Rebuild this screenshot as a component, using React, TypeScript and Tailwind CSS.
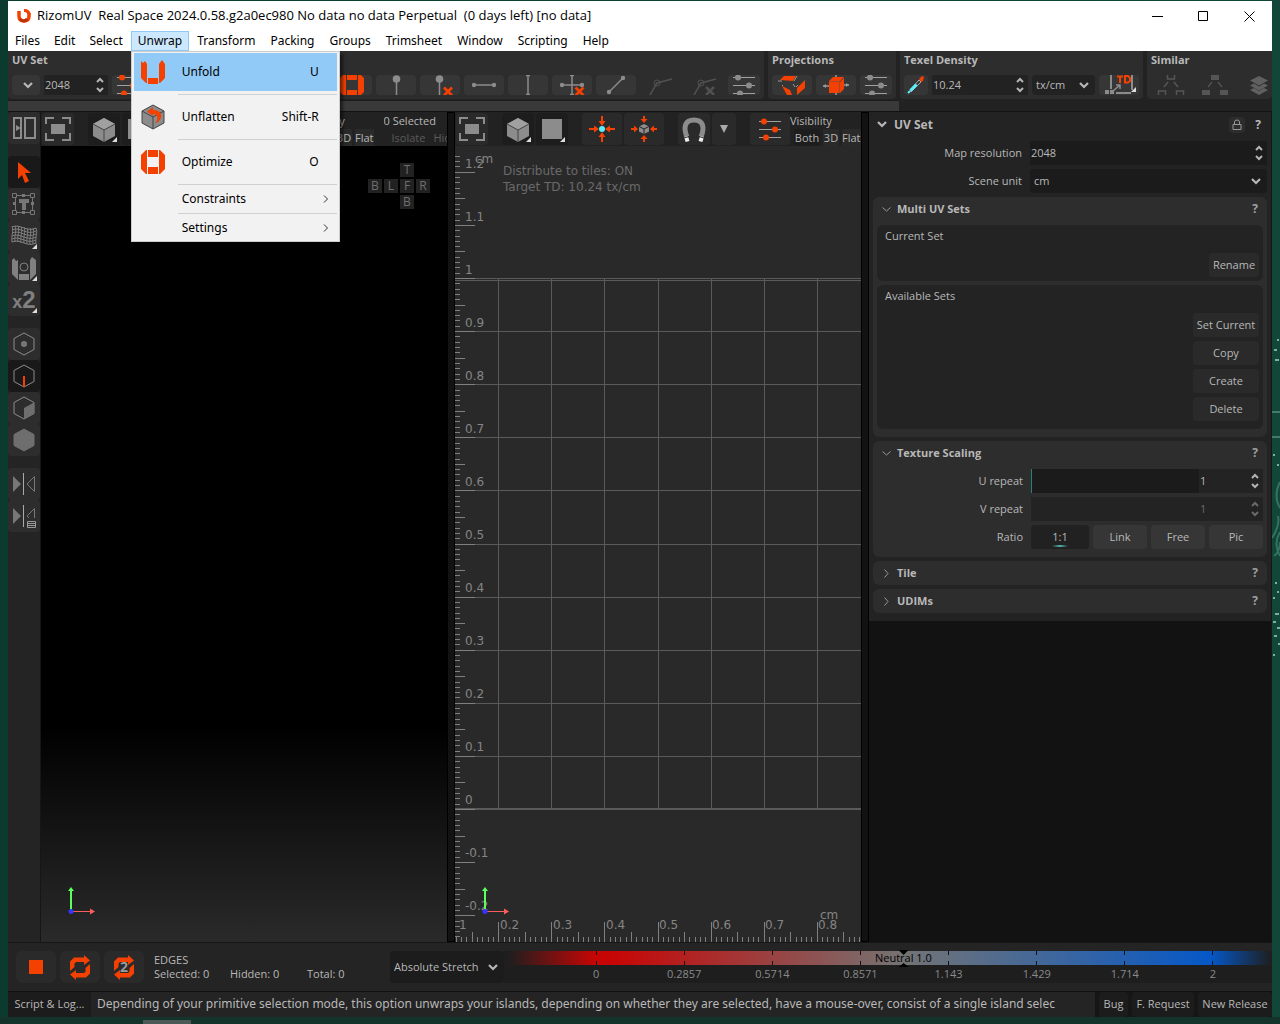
import React from "react";

type Kids = { children?: React.ReactNode };

const ORANGE = "#f44000";
const GREY = "#8c8c8c";

function Svg({ w, h, children, className = "" }: Kids & { w: number; h: number; className?: string }) {
  return (
    <svg width={w} height={h} viewBox={`0 0 ${w} ${h}`} className={`block shrink-0 ${className}`} fill="none" aria-hidden="true">
      {children}
    </svg>
  );
}

function Chevron({ className = "" }: { className?: string }) {
  return (
    <Svg w={10} h={7} className={className}>
      <path d="M1 1l4 4 4-4" stroke="currentColor" strokeWidth="2.200" />
    </Svg>
  );
}

function Spinner({ dim = false }: { dim?: boolean }) {
  return (
    <div className={`flex shrink-0 flex-col items-center gap-1 ${dim ? "text-[#6a6a6a]" : "text-[#b4b4b4]"}`}>
      <button aria-label="Increase" className="block">
        <Svg w={8} h={6}>
          <path d="M1 5l3-3 3 3" stroke="currentColor" strokeWidth="2" />
        </Svg>
      </button>
      <button aria-label="Decrease" className="block">
        <Svg w={8} h={6}>
          <path d="M1 1l3 3 3-3" stroke="currentColor" strokeWidth="2" />
        </Svg>
      </button>
    </div>
  );
}

function Sliders({ h = 20, knob = GREY }: { h?: number; knob?: string }) {
  const ys = h === 20 ? [2, 10, 18] : [8, 16, 24];
  const xs = [10, 21, 12];
  return (
    <Svg w={32} h={h}>
      {ys.map((y, i) => (
        <g key={y}>
          <path d={`M5 ${y + 0.5}h22`} stroke="#a0a0a0" />
          <circle cx={xs[i]} cy={y + 0.5} r="3" fill={knob} />
        </g>
      ))}
    </Svg>
  );
}

function RedX() {
  return <path d="M28.500 12.500l8 8M36.500 12.500l-8 8" stroke={ORANGE} strokeWidth="2.800" />;
}

function OptimizeShape() {
  return (
    <g fill={ORANGE}>
      <path d="M7 0h10v7H7zM7 17h10v7H7zM6 0v24H5L0 19V5L5 0zM18 0v24h1l5-5V5l-5-5z" />
    </g>
  );
}

function ToolButton({ label, children, w = 40, flat = false }: Kids & { label: string; w?: 24 | 28 | 32 | 36 | 40; flat?: boolean }) {
  const widths = { 24: "w-6", 28: "w-7", 32: "w-8", 36: "w-9", 40: "w-10" };
  return (
    <button
      aria-label={label}
      className={`flex h-5 shrink-0 items-center justify-center overflow-hidden rounded ${widths[w]} ${flat ? "" : "bg-[#363636]"}`}
    >
      {children}
    </button>
  );
}

function Group({ title, className = "", children }: Kids & { title: string; className?: string }) {
  return (
    <section className={`flex h-12 flex-col justify-between rounded-b bg-[#2d2d2d] px-1 pb-1 ${className}`}>
      <h2 className="h-5 text-[11px] leading-[18px] font-bold whitespace-nowrap">{title}</h2>
      <div className="flex gap-1">{children}</div>
    </section>
  );
}

function TopToolbar() {
  return (
    <div className="flex gap-1 overflow-hidden bg-[#222] pb-px">
      <Group title="UV Set" className="w-36 shrink-0">
        <ToolButton label="UV set list" w={28}>
          <Chevron className="ml-1" />
        </ToolButton>
        <div className="flex h-5 w-16 items-center bg-[#222] pr-1">
          <input aria-label="UV set resolution" defaultValue="2048" className="w-0 flex-1 bg-transparent pl-px text-[11px] outline-none" />
          <Spinner />
        </div>
        <ToolButton label="UV set options" w={32}>
          <Sliders knob={ORANGE} />
        </ToolButton>
      </Group>
      <section className="flex min-w-0 flex-1 items-end justify-end gap-1 overflow-hidden rounded-b bg-[#2d2d2d] px-1 pb-1">
        <ToolButton label="Optimize">
          <Svg w={24} h={20}>
            <g transform="translate(0 -2)">
              <OptimizeShape />
            </g>
          </Svg>
        </ToolButton>
        <ToolButton label="Pin">
          <Svg w={40} h={20}>
            <path d="M20.500 4v16" stroke={GREY} strokeWidth="1.500" />
            <circle cx="20.500" cy="4" r="3.800" fill={GREY} />
          </Svg>
        </ToolButton>
        <ToolButton label="Remove pin">
          <Svg w={40} h={20}>
            <path d="M19.500 4v16" stroke={GREY} strokeWidth="1.500" />
            <circle cx="19.500" cy="4" r="3.800" fill={GREY} />
            <g transform="translate(-4.500 0)">
              <RedX />
            </g>
          </Svg>
        </ToolButton>
        <ToolButton label="Horizontal constraint">
          <Svg w={40} h={20}>
            <path d="M10 10h20" stroke={GREY} strokeWidth="1.500" />
            <circle cx="10" cy="10" r="2.200" fill={GREY} />
            <circle cx="30" cy="10" r="2.200" fill={GREY} />
          </Svg>
        </ToolButton>
        <ToolButton label="Vertical constraint">
          <Svg w={40} h={20}>
            <path d="M20 0v20M18 .5h4M18 19.500h4" stroke={GREY} strokeWidth="1.500" />
          </Svg>
        </ToolButton>
        <ToolButton label="Remove constraints">
          <Svg w={40} h={20}>
            <path d="M20 0v20M10 10h20M18 .5h4M18 19.500h4" stroke={GREY} strokeWidth="1.500" />
            <circle cx="10" cy="10" r="2.200" fill={GREY} />
            <circle cx="30" cy="10" r="2.200" fill={GREY} />
            <g transform="translate(-5 0)">
              <RedX />
            </g>
          </Svg>
        </ToolButton>
        <ToolButton label="Align edge">
          <Svg w={40} h={20}>
            <path d="M13 17L27 3" stroke={GREY} strokeWidth="1.500" />
            <circle cx="13" cy="17" r="2.200" fill={GREY} />
            <circle cx="27" cy="3" r="2.200" fill={GREY} />
          </Svg>
        </ToolButton>
        <ToolButton label="Angle constraint" flat>
          <Svg w={40} h={20}>
            <path d="M10 20l7-12 15-4" stroke="#505050" strokeWidth="1.500" />
            <circle cx="17" cy="8" r="3" stroke="#505050" />
          </Svg>
        </ToolButton>
        <ToolButton label="Remove angle constraint" flat>
          <Svg w={40} h={20}>
            <path d="M10 20l7-12 15-4" stroke="#505050" strokeWidth="1.500" />
            <circle cx="17" cy="8" r="3" stroke="#505050" />
            <path d="M22 12l8 8M30 12l-8 8" stroke="#505050" strokeWidth="2.500" />
          </Svg>
        </ToolButton>
        <ToolButton label="Unwrap options" w={32}>
          <Sliders />
        </ToolButton>
      </section>
      <Group title="Projections" className="w-32 shrink-0">
        <ToolButton label="Planar projection">
          <Svg w={40} h={20}>
            <path d="M8 5l4-4h12l-3 5z" fill={ORANGE} />
            <path d="M10 11l8 4 2 5h-5z" fill={ORANGE} />
            <path d="M25 13l8-8v8l-8 7z" fill={ORANGE} />
            <path d="M6 6h4M22 6l3-5M11 10l-1 1M21 9l2 3M24 12l2-2" stroke="#999" />
          </Svg>
        </ToolButton>
        <ToolButton label="Box projection">
          <Svg w={40} h={20}>
            <path d="M7 11h6M27 10h6M20 0v3M20 18v2" stroke="#999" strokeWidth="1.500" />
            <path d="M7 11l3-2v4zM33 10l-3-2v4z" fill="#999" />
            <path d="M13 6l4-4h11l-4 4zM13 7h10v11H13zM24 7l4-4v11l-4 4z" fill={ORANGE} />
            <path d="M13 6.500h10.500V18M23.500 6.500L28 2.500" stroke="#a8472a" />
          </Svg>
        </ToolButton>
        <ToolButton label="Projection options" w={32}>
          <Sliders />
        </ToolButton>
      </Group>
      <Group title="Texel Density" className="w-[243px] shrink-0">
        <ToolButton label="Pick texel density" w={24}>
          <Svg w={24} h={20}>
            <path d="M4 18l2-2" stroke="#56f0ff" strokeWidth="2" />
            <path d="M6 15l9-10 2 2-10 10z" stroke="#aaa" />
            <path d="M6.500 15.500l6-6" stroke="#56f0ff" strokeWidth="3" />
            <path d="M15 4l3-3 2 1-1 4-2 1z" fill={ORANGE} />
          </Svg>
        </ToolButton>
        <div className="flex h-5 w-24 items-center bg-[#222] pr-1">
          <input aria-label="Texel density" defaultValue="10.24" className="w-0 flex-1 bg-transparent pl-px text-[11px] outline-none" />
          <Spinner />
        </div>
        <div className="relative h-5 w-[63px]">
          <select aria-label="Texel density unit" className="block h-5 w-full appearance-none rounded-sm bg-[#222] pl-1 text-[11px] outline-none">
            <option>tx/cm</option>
          </select>
          <Chevron className="pointer-events-none absolute top-[7px] right-1.5" />
        </div>
        <ToolButton label="Apply texel density">
          <Svg w={40} h={20}>
            <path d="M12 0v14M33 0v15M17 18h15" stroke={GREY} strokeWidth="2" />
            <path d="M14 16l7-6M17 10h4v4" stroke={GREY} strokeWidth="1.500" />
            <path d="M6 15h4v4H6zM11 15h4v4h-4z" fill={GREY} />
            <path d="M18 1.500h6M21 1.500V8M26 1h3l2 2v3l-2 1.500h-3z" stroke={ORANGE} strokeWidth="2" />
            <path d="M37 12v5h-5z" fill="#ddd" />
          </Svg>
        </ToolButton>
      </Group>
      <Group title="Similar" className="w-[125px] shrink-0 overflow-hidden">
        <ToolButton label="Select similar" flat>
          <Svg w={40} h={20}>
            <path d="M16.500 0v4h7V0M7.500 20v-4h7v4M25.500 20v-4h7v4M17 7l-4 5M23 7l4 5" stroke="#555" strokeWidth="1.500" />
          </Svg>
        </ToolButton>
        <ToolButton label="Group similar" flat>
          <Svg w={40} h={20}>
            <path d="M16 0h8v5h-8zM7 15h8v5H7zM25 15h8v5h-8z" fill="#555" />
            <path d="M17 7l-4 5M23 7l4 5" stroke="#505050" strokeWidth="1.500" />
          </Svg>
        </ToolButton>
        <ToolButton label="Stack similar" w={40} flat>
          <Svg w={40} h={20}>
            <path d="M11 15l9 5 9-5-4-2-5 3-5-3zM11 10.500l9 5 9-5-4-2-5 3-5-3zM11 5.500L20 1l9 4.500-9 5z" fill="#606060" />
          </Svg>
        </ToolButton>
      </Group>
    </div>
  );
}

function ViewButton({ label, dark = false, w = 32, corner = false, children }: Kids & { label: string; dark?: boolean; w?: 24 | 32 | 40; corner?: boolean }) {
  const widths = { 24: "w-6", 32: "w-8", 40: "w-10" };
  return (
    <button
      aria-label={label}
      className={`relative flex h-8 shrink-0 items-center justify-center rounded ${widths[w]} ${dark ? "bg-[#1d1d1d]" : "bg-[#2a2a2a]"}`}
    >
      {children}
      {corner && (
        <Svg w={5} h={5} className="absolute right-[3px] bottom-[3px]">
          <path d="M5 0v5H0z" fill="#ddd" />
        </Svg>
      )}
    </button>
  );
}

function FitIcon() {
  return (
    <Svg w={32} h={32}>
      <path d="M4 11V5h8M20 5h8v6M28 20v7h-8M12 27H4v-7" stroke={GREY} strokeWidth="2" />
      <path d="M9 11h14v10H9z" fill={GREY} />
    </Svg>
  );
}

function CubeIcon() {
  return (
    <Svg w={32} h={32}>
      <path d="M16 5l11 6v12l-11 6-11-6V11z" fill={GREY} />
      <path d="M16 5l11 6-11 6-11-6z" fill="#a0a0a0" />
      <path d="M5 11l11 6 11-6M16 17v12" stroke="#444" />
    </Svg>
  );
}

function VisibilityBlock() {
  return (
    <div className="flex shrink-0 flex-col text-[11px] leading-[17px]">
      <span>Visibility</span>
      <div className="flex gap-[3px] pl-1 whitespace-nowrap">
        <button className="w-[26px] rounded-sm bg-[#1d1d1d]">Both</button>
        <button className="w-4 bg-[#2a2a2a]">3D</button>
        <button className="bg-[#2a2a2a]">Flat</button>
      </div>
    </div>
  );
}

function ArrowsIn({ centre, out = false }: { centre: React.ReactNode; out?: boolean }) {
  const head = out
    ? "M12.500 9L16 13l3.500-4zM12.500 25l3.500-4 3.500 4z"
    : "M12.500 8l3.500 5 3.500-5zM12.500 24l3.500-5 3.500 5zM8 12.500l5 3.500-5 3.500zM24 12.500L19 16l5 3.500z";
  const outHeads = "M12.500 6l3.500 4 3.500-4zM12.500 26l3.500-4 3.500 4zM6 12.500l4 3.500-4 3.500zM26 12.500L22 16l4 3.500z";
  return (
    <Svg w={32} h={32}>
      <path d="M16 3v5M16 29v-5M3 16h5M29 16h-5" stroke={ORANGE} strokeWidth="2" />
      <path d={out ? outHeads : head} fill={ORANGE} />
      {centre}
    </Svg>
  );
}

function Gizmo() {
  return (
    <Svg w={30} h={30} className="absolute bottom-[26px]">
      <path d="M4 26V4" stroke="#5cff5c" strokeWidth="2" />
      <path d="M1 5l3-4 3 4z" fill="#5cff5c" />
      <path d="M4 25.500h20" stroke="#ff5c5c" />
      <path d="M23 22.500l5 3-5 3z" fill="#ff5c5c" />
      <circle cx="4" cy="25.500" r="2.500" fill="#3434ff" />
    </Svg>
  );
}

function View3D() {
  return (
    <section aria-label="3D view" className="flex min-w-0 flex-1 flex-col border-l border-[#161616] bg-[#222]">
      <div className="flex h-[34px] items-center overflow-hidden pl-px">
        <ViewButton label="Fit view">
          <FitIcon />
        </ViewButton>
        <div className="w-3.5 shrink-0" />
        <ViewButton label="Shading" dark corner>
          <CubeIcon />
        </ViewButton>
        <div className="w-0.5 shrink-0" />
        <ViewButton label="Background" dark corner>
          <Svg w={32} h={32}>
            <path d="M6 6h20v20H6z" fill={GREY} />
          </Svg>
        </ViewButton>
        <div className="w-[149px] shrink-0" />
        <VisibilityBlock />
        <div className="ml-2.5 flex min-w-0 flex-1 flex-col overflow-hidden text-[11px] leading-[17px] whitespace-nowrap">
          <span>0 Selected</span>
          <div className="flex gap-2 pl-2 text-[#5c5c5c]">
            <button disabled>Isolate</button>
            <button disabled>Hid</button>
          </div>
        </div>
      </div>
      <div className="relative flex-1 bg-[linear-gradient(180deg,#000_73%,#2a2a2a_100%)]">
        <div className="absolute top-[17px] right-[17px] grid grid-cols-4 gap-0.5 text-center text-xs leading-[14px] text-[#6e6e6e]">
          <button className="col-start-3 size-3.5 bg-[#222]">T</button>
          <button className="col-start-1 size-3.5 bg-[#222]">B</button>
          <button className="size-3.5 bg-[#222]">L</button>
          <button className="size-3.5 bg-[#222]">F</button>
          <button className="size-3.5 bg-[#222]">R</button>
          <button className="col-start-3 size-3.5 bg-[#222]">B</button>
        </div>
        <div className="ml-[26px] flex h-full">
          <Gizmo />
        </div>
      </div>
    </section>
  );
}

const STEP = 53.1;
const TOP = 132;

function UVCanvas() {
  const rows = Array.from({ length: 11 }, (_, i) => Math.round(TOP + i * STEP));
  const cols = Array.from({ length: 7 }, (_, i) => Math.round(43.2 + i * STEP));
  const vTicks = Array.from({ length: 150 }, (_, k) => ({ k, y: Math.round(TOP + ((k - 24) * STEP) / 10) })).filter((t) => t.y > 6 && t.y < 796);
  const hTicks = Array.from({ length: 80 }, (_, k) => ({ k, x: Math.round(43.2 + ((k - 8) * STEP) / 10) })).filter((t) => t.x < 406);
  const vLabels = ["1.2", "1.1", "1", "0.9", "0.8", "0.7", "0.6", "0.5", "0.4", "0.3", "0.2", "0.1", "0", "-0.1", "-0.2"];
  const hLabels = ["0.2", "0.3", "0.4", "0.5", "0.6", "0.7", "0.8"];
  return (
    <svg className="absolute inset-0 size-full font-['DejaVu_Sans'] text-xs" fill="none" role="img" aria-label="UV space">
      {rows.map((y) => (
        <path key={y} d={`M0 ${y + 0.5}H2000`} stroke="#5a5a5a" />
      ))}
      <path d="M0 134.500H2000M0 662.500H2000" stroke="#5a5a5a" />
      {cols.map((x) => (
        <path key={x} d={`M${x + 0.5} 133V663`} stroke="#5a5a5a" />
      ))}
      {vTicks.map(({ k, y }) => (
        <path key={k} d={`M0 ${y + 0.5}h${(k - 4) % 10 === 0 ? 20 : (k - 4) % 5 === 0 ? 10 : 5}`} stroke="#808080" />
      ))}
      {hTicks.map(({ k, x }) => {
        const len = (k - 8) % 10 === 0 ? 20 : (k - 3) % 5 === 0 ? 10 : 5;
        return <path key={k} d={`M${x + 0.5} 796v-${len}`} stroke="#808080" />;
      })}
      <g fill="#858585">
        {vLabels.map((t, i) => (
          <text key={t} x={10} y={22 + i * 53}>
            {t}
          </text>
        ))}
        <text x={20} y={17}>cm</text>
        <text x={4} y={783}>1</text>
        {hLabels.map((t, i) => (
          <text key={t} x={45 + i * 53} y={783}>
            {t}
          </text>
        ))}
        <text x={365} y={773}>cm</text>
      </g>
      <g fill="#6a6a6a">
        <text x={48} y={29}>Distribute to tiles: ON</text>
        <text x={48} y={45}>Target TD: 10.24 tx/cm</text>
      </g>
    </svg>
  );
}

function ViewUV() {
  return (
    <section aria-label="UV view" className="flex min-w-0 flex-1 flex-col bg-[#222]">
      <div className="flex h-[34px] items-center overflow-hidden pl-px">
        <ViewButton label="Fit view">
          <FitIcon />
        </ViewButton>
        <div className="w-3.5 shrink-0" />
        <ViewButton label="Shading" dark corner>
          <CubeIcon />
        </ViewButton>
        <div className="w-0.5 shrink-0" />
        <ViewButton label="Background" dark corner>
          <Svg w={32} h={32}>
            <path d="M6 6h20v20H6z" fill={GREY} />
          </Svg>
        </ViewButton>
        <div className="w-3.5 shrink-0" />
        <ViewButton label="Snap to centre" w={40}>
          <ArrowsIn centre={<circle cx="16" cy="16" r="3" fill="#56f0ff" />} />
        </ViewButton>
        <div className="w-0.5 shrink-0" />
        <ViewButton label="Gather around object" w={40}>
          <ArrowsIn
            out
            centre={
              <g>
                <path d="M16 11l5 2.500v5L16 21l-5-2.500v-5z" fill={GREY} />
                <path d="M11 13.500l5 2.500 5-2.500M16 16v5" stroke="#222" />
              </g>
            }
          />
        </ViewButton>
        <div className="w-3.5 shrink-0" />
        <ViewButton label="Magnet">
          <Svg w={32} h={32}>
            <path d="M9 24C5 14 7 7 16 7s11 7 7 17" stroke={GREY} strokeWidth="5" />
            <path d="M8 23.500l1.500 5M24 23.500l-1.500 5" stroke="#eee" strokeWidth="4" />
            <path d="M6 25l5-1.500M26 25l-5-1.500" stroke="#2d2d2d" />
          </Svg>
        </ViewButton>
        <div className="w-0.5 shrink-0" />
        <ViewButton label="Magnet options" w={24}>
          <Svg w={8} h={8}>
            <path d="M0 0h8L4 8z" fill="#aaa" />
          </Svg>
        </ViewButton>
        <div className="w-3.5 shrink-0" />
        <ViewButton label="View options" w={40}>
          <Sliders h={32} knob={ORANGE} />
        </ViewButton>
        <VisibilityBlock />
      </div>
      <div className="relative flex-1 overflow-hidden bg-[#292929]">
        <UVCanvas />
        <div className="ml-[26px] flex h-full">
          <Gizmo />
        </div>
      </div>
    </section>
  );
}

function SideButton({ label, active = false, corner = false, children }: Kids & { label: string; active?: boolean; corner?: boolean }) {
  return (
    <button
      aria-label={label}
      className={`relative flex size-8 shrink-0 items-center justify-center rounded-sm ${active ? "bg-[#191919]" : "bg-[#2d2d2d]"}`}
    >
      {children}
      {corner && (
        <Svg w={5} h={5} className="absolute right-[3px] bottom-[3px]">
          <path d="M5 0v5H0z" fill="#ddd" />
        </Svg>
      )}
    </button>
  );
}

const HEX = "M16 5l10 5.500v11L16 27 6 21.500v-11z";

function LeftTools() {
  return (
    <nav aria-label="Tools" className="flex w-8 shrink-0 flex-col bg-[#242424]">
      <SideButton label="Split view">
        <Svg w={32} h={32}>
          <path d="M6 6h7v20H6zM17 6h10v20H17z" stroke={GREY} strokeWidth="2" />
          <path d="M8 13l5 3-5 3z" fill={GREY} />
        </Svg>
      </SideButton>
      <div className="h-3" />
      <SideButton label="Select tool" active>
        <Svg w={32} h={32}>
          <path d="M10 6l13 11h-6l4 8-4 2-3-8-4 4z" fill={ORANGE} />
        </Svg>
      </SideButton>
      <SideButton label="Transform tool">
        <Svg w={32} h={32}>
          <g stroke="#777">
            <path d="M9 7.500h14M9 24.500h14M7.500 9v14M24.500 9v14" />
            <path d="M4.500 5.500h4v4h-4zM22.500 5.500h4v4h-4zM4.500 22.500h4v4h-4zM22.500 22.500h4v4h-4z" />
          </g>
          <path d="M14 6h3v3h-3zM14 23h3v3h-3zM5 14h3v3H5zM23 14h3v3h-3z" fill="#777" />
          <path d="M11 11h10v4h-3v7h-4v-7h-3z" fill="#777" />
        </Svg>
      </SideButton>
      <SideButton label="Grid warp tool" corner>
        <Svg w={32} h={32}>
          {[0, 3, 6, 9, 12, 15].map((d) => (
            <path key={d} d={`M4 ${7 + d}c8-4 15 6 24 1`} stroke="#808080" />
          ))}
          {[4, 7, 10, 13, 16, 19, 22, 25, 28].map((x, i) => (
            <path key={x} d={`M${x} ${i < 3 ? 6 : i < 5 ? 7 : 8}c2 5-1 9 0 16`} stroke="#808080" />
          ))}
        </Svg>
      </SideButton>
      <SideButton label="Unfold tool" corner>
        <Svg w={32} h={32}>
          <path d="M4 8l2-2 2 3 2-1v20l-6-6zM28 8l-4-3-2 3v20l6-6zM11 22h10v6H11z" fill="#808080" />
          <circle cx="16" cy="15" r="4" stroke="#808080" />
        </Svg>
      </SideButton>
      <SideButton label="Multiply by two" corner>
        <span className="flex items-baseline pt-0.5 font-['Liberation_Sans'] font-bold text-[#808080]">
          <span className="text-lg leading-6">x</span>
          <span className="text-2xl leading-6">2</span>
        </span>
      </SideButton>
      <div className="h-3" />
      <SideButton label="Vertex mode">
        <Svg w={32} h={32}>
          <path d={HEX} stroke="#8c8c8c" />
          <circle cx="16" cy="16" r="3" fill="#777" />
        </Svg>
      </SideButton>
      <SideButton label="Edge mode" active>
        <Svg w={32} h={32}>
          <path d={HEX} stroke="#8c8c8c" />
          <path d="M16 16v11" stroke={ORANGE} strokeWidth="2" />
        </Svg>
      </SideButton>
      <SideButton label="Polygon mode">
        <Svg w={32} h={32}>
          <path d={HEX} stroke="#8c8c8c" />
          <path d="M16 16l10-5.500v11L16 27z" fill="#6e6e6e" />
        </Svg>
      </SideButton>
      <SideButton label="Island mode">
        <Svg w={32} h={32}>
          <path d={HEX} fill="#6e6e6e" stroke="#6e6e6e" />
        </Svg>
      </SideButton>
      <div className="h-3" />
      <SideButton label="Symmetry">
        <Svg w={32} h={32}>
          <path d="M5 8l8 8-8 8z" fill="#777" />
          <path d="M15.500 5v22" stroke="#aaa" />
          <path d="M26.500 8.500v15L19 16z" stroke="#777" />
        </Svg>
      </SideButton>
      <SideButton label="Symmetry options">
        <Svg w={32} h={32}>
          <path d="M5 8l8 8-8 8z" fill="#777" />
          <path d="M15.500 5v22" stroke="#aaa" />
          <path d="M26.500 18V8.500L19 16l2 2" stroke="#777" />
          <path d="M19.500 21.500h8v6h-8zM19 23.500h9M19 25.500h9" stroke="#999" />
        </Svg>
      </SideButton>
    </nav>
  );
}

function PanelHeader({ title, open = false }: { title: string; open?: boolean }) {
  return (
    <div className="flex h-6 items-center pr-1 pl-2">
      <button className="flex items-center gap-1.5 text-[11px] font-bold">
        <Svg w={10} h={10}>
          <path d={open ? "M1.500 3.500l4 3.500 4-3.500" : "M3.500 1.500l3.500 4-3.500 4"} stroke="#999" />
        </Svg>
        {title}
      </button>
      <button aria-label={`${title} help`} className="ml-auto w-4 text-center text-xs font-bold text-[#a0a0a0]">
        ?
      </button>
    </div>
  );
}

function SmallButton({ children, wide = false }: Kids & { wide?: boolean }) {
  return <button className={`h-6 rounded bg-[#2a2a2a] text-center whitespace-nowrap ${wide ? "w-[66px]" : "w-[50px]"}`}>{children}</button>;
}

function RightPanel() {
  return (
    <aside className="flex w-[403px] shrink-0 flex-col border-r border-[#161616] bg-[#121212] text-[11px]">
      <div className="bg-[#232323] pr-1 pb-2 pl-1">
        <div className="flex h-[29px] items-center pb-1">
          <button className="flex items-center gap-[7px] pl-1 text-xs font-bold">
            <Chevron />
            <span>UV Set</span>
          </button>
          <button aria-label="Lock" className="ml-auto flex size-4 items-center justify-center rounded-sm bg-[#2d2d2d]">
            <Svg w={10} h={12}>
              <path d="M1 5.500h8v5H1zM2.500 5V3q0-2 2.500-2t2.500 2v2" stroke="#999" />
            </Svg>
          </button>
          <button aria-label="UV Set help" className="mr-px ml-[5px] w-4 text-center text-xs font-bold">
            ?
          </button>
        </div>
        <div className="grid grid-cols-[149px_1fr] items-center gap-x-2 gap-y-1">
          <label htmlFor="res" className="text-right">Map resolution</label>
          <div className="flex h-6 items-center bg-[#1b1b1b] pr-1">
            <input id="res" defaultValue="2048" className="w-0 flex-1 bg-transparent pl-px outline-none" />
            <Spinner />
          </div>
          <label htmlFor="unit" className="text-right">Scene unit</label>
          <div className="relative h-6">
            <select id="unit" className="block h-6 w-full appearance-none rounded-sm bg-[#1b1b1b] pl-1 outline-none">
              <option>cm</option>
            </select>
            <Chevron className="pointer-events-none absolute top-[9px] right-1.5" />
          </div>
        </div>
        <section className="mt-1 rounded-md bg-[#2d2d2d] px-1 pb-2">
          <div className="-mx-1">
            <PanelHeader title="Multi UV Sets" open />
          </div>
          <div className="mt-1 flex h-14 flex-col justify-between rounded-md bg-[#232323] pt-0.5 pr-1 pb-1 pl-2">
            <h3 className="leading-[18px]">Current Set</h3>
            <div className="self-end">
              <SmallButton>Rename</SmallButton>
            </div>
          </div>
          <div className="mt-1 flex h-36 flex-col justify-between rounded-md bg-[#232323] pt-0.5 pr-1 pb-2 pl-2">
            <h3 className="leading-[18px]">Available Sets</h3>
            <div className="flex flex-col gap-1 self-end">
              <SmallButton wide>Set Current</SmallButton>
              <SmallButton wide>Copy</SmallButton>
              <SmallButton wide>Create</SmallButton>
              <SmallButton wide>Delete</SmallButton>
            </div>
          </div>
        </section>
        <section className="mt-1 rounded-md bg-[#2d2d2d] pb-2">
          <PanelHeader title="Texture Scaling" open />
          <div className="mt-1 grid grid-cols-[150px_1fr] items-center gap-x-2 gap-y-1 pr-1">
            <label htmlFor="urep" className="text-right">U repeat</label>
            <div className="flex h-6 items-center border-l border-[#2a7f7c] bg-[#232323] pr-1">
              <span className="h-full w-[167px] shrink-0 bg-[#1b1b1b]" />
              <input id="urep" defaultValue="1" className="w-0 flex-1 bg-transparent pl-px outline-none" />
              <Spinner />
            </div>
            <label htmlFor="vrep" className="text-right">V repeat</label>
            <div className="flex h-6 items-center bg-[#232323] pr-1">
              <input id="vrep" defaultValue="1" disabled className="w-0 flex-1 bg-transparent pl-[169px] text-[#6a6a6a] outline-none" />
              <Spinner dim />
            </div>
            <span className="text-right">Ratio</span>
            <div className="flex h-6 gap-1">
              <button className="relative w-[58px] rounded-sm bg-[#212121]">
                1:1
                <span className="absolute bottom-0.5 left-[21px] h-0.5 w-4 bg-linear-to-r from-transparent via-[#4fb5b0] to-transparent" />
              </button>
              <button className="flex-1 rounded-sm bg-[#363636]">Link</button>
              <button className="flex-1 rounded-sm bg-[#363636]">Free</button>
              <button className="flex-1 rounded-sm bg-[#363636]">Pic</button>
            </div>
          </div>
        </section>
        <section className="mt-1 rounded-md bg-[#2d2d2d]">
          <PanelHeader title="Tile" />
        </section>
        <section className="mt-1 rounded-md bg-[#2d2d2d]">
          <PanelHeader title="UDIMs" />
        </section>
      </div>
    </aside>
  );
}

const LOOP_HALF = "M4 2.500H14V0l6 5.500L14 10V7H6L4.500 8.500V12L0 16V6.500z";

function LoopShape() {
  return (
    <g fill={ORANGE}>
      <path d={LOOP_HALF} />
      <path d={LOOP_HALF} transform="rotate(180 10 12.500)" />
    </g>
  );
}

function BottomBar() {
  const labels = ["0", "0.2857", "0.5714", "0.8571", "1.143", "1.429", "1.714", "2"];
  return (
    <div className="flex h-[49px] items-center border-t border-[#161616] bg-[#242424] pl-2">
      <div className="flex gap-1">
        <button aria-label="Stop" className="flex h-8 w-10 items-center justify-center rounded-md bg-[#2a2a2a]">
          <span className="size-3.5 bg-[#f44000]" />
        </button>
        <button aria-label="Repeat" className="flex h-8 w-10 items-center justify-center rounded-md bg-[#2a2a2a]">
          <Svg w={20} h={25}>
            <LoopShape />
          </Svg>
        </button>
        <button aria-label="Repeat twice" className="relative flex h-8 w-10 items-center justify-center rounded-md bg-[#2a2a2a]">
          <Svg w={20} h={25}>
            <LoopShape />
          </Svg>
          <span className="absolute text-sm font-bold text-[#9a9a9a]">2</span>
        </button>
      </div>
      <div className="ml-2.5 w-[236px] shrink-0 text-[11px] leading-[14px]">
        <p>EDGES</p>
        <p className="grid grid-cols-[76px_77px_1fr]">
          <span>Selected: 0</span>
          <span>Hidden: 0</span>
          <span>Total: 0</span>
        </p>
      </div>
      <div className="relative h-8 w-[114px] shrink-0">
        <select aria-label="Colour map mode" className="block h-8 w-full appearance-none rounded bg-[#1c1c1c] pl-1 text-[11px] outline-none">
          <option>Absolute Stretch</option>
        </select>
        <Chevron className="pointer-events-none absolute top-[13px] right-1.5" />
      </div>
      <div className="flex h-8 min-w-0 flex-1 flex-col bg-[#1e1e1e]">
        <div className="relative flex h-[17px] bg-[linear-gradient(90deg,#1e1e1e_0.5%,#c80505_12%,#c80505_14%,#747474_52%,#0558c8_92%,#1e1e1e_100%)] pr-[15px] pl-12">
          {labels.map((l) => (
            <div key={l} className="flex flex-1 flex-col items-center justify-between">
              <span className="h-1 w-px bg-[#111]" />
              <span className="h-1 w-px bg-[#111]" />
            </div>
          ))}
          <div className="absolute inset-y-0 left-[52%] flex -translate-x-1/2 items-center justify-center text-[11px] text-black">
            <Svg w={10} h={17} className="absolute">
              <path d="M0 0h10L5 5zM0 17h10l-5-4z" fill="#000" />
            </Svg>
            <span className="relative whitespace-nowrap">Neutral 1.0</span>
          </div>
        </div>
        <div className="flex pr-[15px] pl-12 text-center text-[11px] leading-[18px] text-[#8a8a8a]">
          {labels.map((l) => (
            <span key={l} className="flex-1">
              {l}
            </span>
          ))}
        </div>
      </div>
    </div>
  );
}

function StatusBar() {
  return (
    <div className="flex h-[26px] items-stretch border-t border-[#111] bg-[#161616] text-[11px]">
      <button className="w-[83px] shrink-0 bg-[#1c1c1c] whitespace-nowrap">Script &amp; Log...</button>
      <p className="min-w-0 flex-1 overflow-hidden bg-[#242424] pl-1.5 font-['Noto_Sans',sans-serif] text-xs leading-6 whitespace-nowrap">
        Depending of your primitive selection mode, this option unwraps your islands, depending on whether they are selected, have a mouse-over, consist of a single island selec
      </p>
      <div className="ml-1 flex shrink-0 gap-1 whitespace-nowrap">
        <button className="w-[29px] rounded bg-[#1c1c1c]">Bug</button>
        <button className="w-[62px] rounded bg-[#1c1c1c]">F. Request</button>
        <button className="w-[74px] rounded bg-[#1c1c1c]">New Release</button>
      </div>
    </div>
  );
}

function MenuRow({ icon, label, shortcut, active = false }: { icon: React.ReactNode; label: string; shortcut: string; active?: boolean }) {
  return (
    <button role="menuitem" className={`flex h-[38px] w-full items-center pr-[18px] pl-[7px] ${active ? "bg-[#91c9f7]" : ""}`}>
      <span className="w-[41px]">{icon}</span>
      {label}
      <span className="ml-auto">{shortcut}</span>
    </button>
  );
}

function SubRow({ label }: { label: string }) {
  return (
    <button role="menuitem" className="flex h-[22px] w-full items-center pr-2 pl-12">
      {label}
      <Svg w={6} h={8} className="ml-auto">
        <path d="M1 .5L4.500 4 1 7.500" stroke="#333" />
      </Svg>
    </button>
  );
}

function Rule() {
  return <div role="separator" className="my-[3px] ml-11 h-px bg-[#d0d0d0]" />;
}

function UnwrapMenu() {
  return (
    <div role="menu" className="absolute top-full left-0 z-20 w-[209px] border border-[#ccc] bg-[#f2f2f2] px-0.5 pt-px pb-0.5 text-black shadow-[3px_3px_3px_rgba(0,0,0,0.5)]">
      <MenuRow
        active
        label="Unfold"
        shortcut="U"
        icon={
          <Svg w={24} h={24}>
            <path d="M0 1l2 2 2-2 2 3v19H5L0 18zM24 4l-3-4-3 4v19h1l5-5zM7 18h10v6H7z" fill={ORANGE} />
          </Svg>
        }
      />
      <Rule />
      <MenuRow
        label="Unflatten"
        shortcut="Shift-R"
        icon={
          <Svg w={24} h={26}>
            <path d="M12 1l11 6v12l-11 6-11-6V7z" fill="#8c8c8c" stroke="#444" />
            <path d="M1 7l11 6 11-6M12 13v12" stroke="#444" />
            <path d="M6 7.500L12 3v3c6 0 9 3 8 7.500-1 3-3 5-6 6 2-3 3-5 2-7-1-2-2-2.500-4-2.500V12z" fill={ORANGE} />
          </Svg>
        }
      />
      <Rule />
      <MenuRow
        label="Optimize"
        shortcut="O"
        icon={
          <Svg w={24} h={24}>
            <OptimizeShape />
          </Svg>
        }
      />
      <Rule />
      <SubRow label="Constraints" />
      <Rule />
      <SubRow label="Settings" />
    </div>
  );
}

function TitleBar() {
  return (
    <header className="flex h-[30px] items-center bg-white pl-2 text-[13px] text-black">
      <Svg w={16} h={16}>
        <path d="M3 3v5q0 5 5 5t5-5V5" stroke={ORANGE} strokeWidth="3.500" />
        <path d="M8 2.500q5 0 5 4" stroke={ORANGE} strokeWidth="3" />
        <path d="M4 11q4 4 7 0" stroke="#b83209" strokeWidth="3" />
      </Svg>
      <h1 className="ml-[5px] whitespace-pre">RizomUV  Real Space 2024.0.58.g2a0ec980 No data no data Perpetual  (0 days left) [no data]</h1>
      <div className="ml-auto flex">
        <button aria-label="Minimize" className="flex w-[46px] justify-center">
          <Svg w={11} h={11}>
            <path d="M0 5.500h11" stroke="#000" />
          </Svg>
        </button>
        <button aria-label="Maximize" className="flex w-[46px] justify-center">
          <Svg w={11} h={11}>
            <path d="M.5 .5h9v9h-9z" stroke="#000" />
          </Svg>
        </button>
        <button aria-label="Close" className="flex w-[46px] justify-center">
          <Svg w={11} h={11}>
            <path d="M.5 .5l10 10M10.500 .5l-10 10" stroke="#000" />
          </Svg>
        </button>
      </div>
    </header>
  );
}

function MenuBar() {
  const after = ["Transform", "Packing", "Groups", "Trimsheet", "Window", "Scripting", "Help"];
  return (
    <nav aria-label="Main menu" className="flex h-5 bg-white font-['Noto_Sans',sans-serif] text-xs text-black">
      {["Files", "Edit", "Select"].map((m) => (
        <button key={m} className="px-[7px]">
          {m}
        </button>
      ))}
      <div className="relative ml-px flex">
        <button aria-expanded="true" className="border border-[#90c8f6] bg-[#cce8ff] px-1.5 leading-[18px]">
          Unwrap
        </button>
        <UnwrapMenu />
      </div>
      {after.map((m) => (
        <button key={m} className="pr-[7px] pl-2">
          {m}
        </button>
      ))}
    </nav>
  );
}

function Wallpaper() {
  return (
    <svg className="absolute top-0 right-0 h-full w-2" fill="none" aria-hidden="true">
      <path d="M0 412h8M0 437h8" stroke="#3f7c6c" strokeWidth="2" />
      <path d="M8 482q-7 14 0 26M0 538q8-12 6-22M8 532q-7 12 0 24M2 556q6-4 6-14" stroke="#357262" strokeWidth="2" />
      <path d="M2 350h3M5 340h2M3 360h4M1 455h2M5 465h2M3 583h2M1 598h2M5 592h2M3 614h4M1 622h3M5 628h3M2 636h3M6 644h2M1 655h2" stroke="#7fae9f" strokeWidth="2" />
    </svg>
  );
}

export default function App() {
  return (
    <div className="relative flex min-h-screen flex-col bg-linear-to-r from-[#0b3a2f] to-[#114638] px-2 pt-px font-['Open_Sans',sans-serif] text-[#b8b8b8]">
      <Wallpaper />
      <TitleBar />
      <MenuBar />
      <TopToolbar />
      <div className="border-b border-[#121212] bg-[#222]">
        <div className="h-[11px] w-[891px] max-w-full border-t border-[#1c1c1c] bg-[#393939]" />
      </div>
      <main className="flex flex-1">
        <LeftTools />
        <View3D />
        <div className="w-2 shrink-0 border border-black bg-[#121212]" />
        <ViewUV />
        <div className="w-2 shrink-0 border border-black bg-[#121212]" />
        <RightPanel />
      </main>
      <BottomBar />
      <StatusBar />
      <div className="-mx-2 flex h-[7px] items-end bg-[#14342b] pl-[143px]">
        <span className="h-1 w-12 bg-[#4c5a56]" />
      </div>
    </div>
  );
}
